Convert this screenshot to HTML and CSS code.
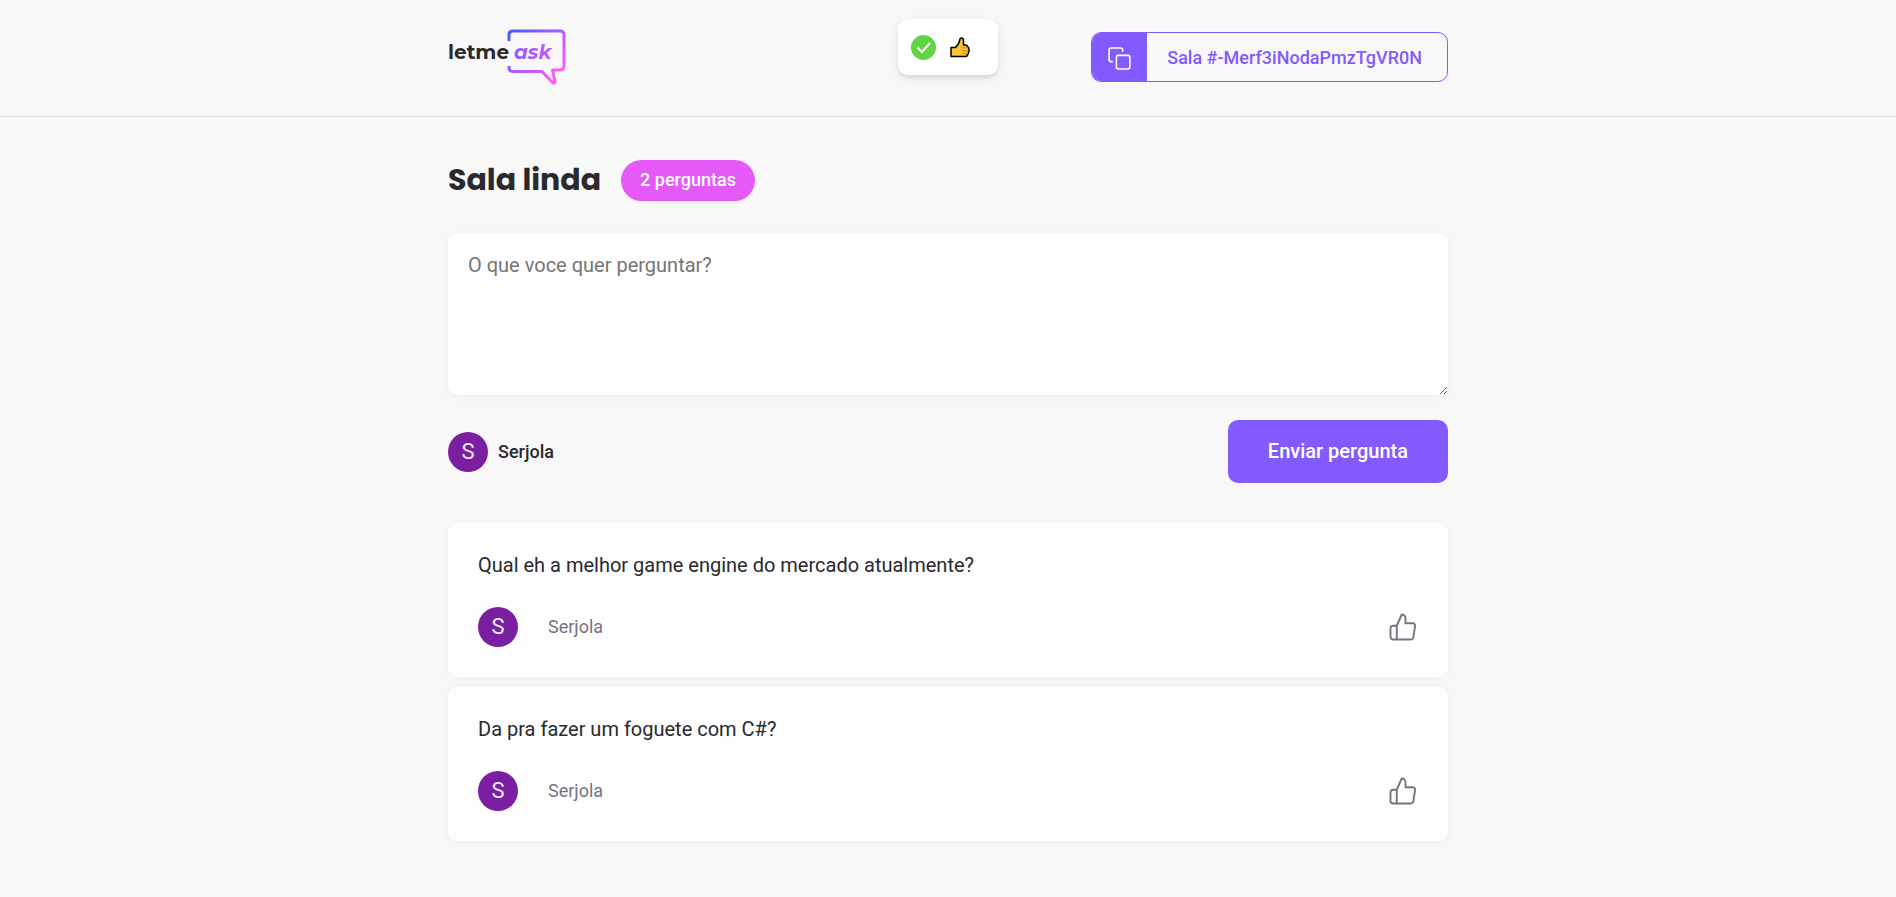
FILE: index.html
```html
<!DOCTYPE html>
<html lang="pt-BR">
<head>
<meta charset="utf-8">
<title>Letmeask</title>
<link rel="stylesheet" href="styles.css">
</head>
<body>
<svg class="symbols" aria-hidden="true">
  <symbol id="like" viewBox="0 0 24 24">
    <path d="M7 22H4C3.470 22 2.961 21.789 2.586 21.414C2.211 21.039 2 20.530 2 20V13C2 12.470 2.211 11.961 2.586 11.586C2.961 11.211 3.470 11 4 11H7M14 9V5C14 4.204 13.684 3.441 13.121 2.879C12.559 2.316 11.796 2 11 2L7 11V22H18.280C18.762 22.005 19.230 21.836 19.598 21.524C19.965 21.212 20.208 20.777 20.280 20.300L21.660 11.300C21.703 11.013 21.684 10.721 21.603 10.442C21.522 10.163 21.382 9.906 21.191 9.687C21 9.469 20.763 9.295 20.498 9.177C20.232 9.059 19.945 8.999 19.655 9H14Z"/>
  </symbol>
</svg>
<header class="page-header">
  <div class="container header-content">
    <svg class="logo" viewBox="0 0 118 58" role="img" aria-label="letme ask">
      <defs>
        <linearGradient id="bubble" gradientUnits="userSpaceOnUse" x1="60" y1="6" x2="104" y2="52">
          <stop offset="0" stop-color="#485bff"/>
          <stop offset="0.5" stop-color="#a95bff"/>
          <stop offset="1" stop-color="#ff59f8"/>
        </linearGradient>
        <linearGradient id="word" gradientUnits="userSpaceOnUse" x1="66" y1="18" x2="104" y2="30">
          <stop offset="0" stop-color="#8c5bff"/>
          <stop offset="1" stop-color="#c85bf8"/>
        </linearGradient>
      </defs>
      <text class="logo-letme" x="0" y="31">letme</text>
      <text class="logo-ask" x="66" y="31">ask</text>
      <path class="logo-bubble" d="M61 13V7Q61 3 65 3H112Q116 3 116 7V38Q116 42 112 42H104.500L107 53.500Q106.500 56 104.500 54.500L94 43.500H65Q61 43.500 61 39.500V38"/>
    </svg>
    <button class="room-code" type="button">
      <span class="copy">
        <svg viewBox="0 0 24 24" aria-hidden="true"><rect x="9" y="9" width="13" height="13" rx="2"/><path d="M5 15H4a2 2 0 0 1-2-2V4a2 2 0 0 1 2-2h9a2 2 0 0 1 2 2v1"/></svg>
      </span>
      <span class="code">Sala #-Merf3iNodaPmzTgVR0N</span>
    </button>
  </div>
</header>

<div class="toast" role="status">
  <svg class="check" viewBox="0 0 25 25" aria-hidden="true"><circle cx="12.500" cy="12.500" r="12.500"/><path d="M6.500 12.500l4.500 4.500 8-9"/></svg>
  <svg class="thumb" viewBox="0 0 20 21" role="img" aria-label="👍">
    <path class="hand" d="M1 10.500H5.500C8 8 9.500 6 9.800 2.500Q10 1 11.500 1Q13.500 1 13.500 4V8H16Q17.500 8 17.500 9.800Q19 10.500 18.800 12Q19.500 14 18.500 15.500Q18.500 17 17.500 17.500Q17.500 19.500 15.500 19.500H1Z"/>
    <path class="fingers" d="M18 10.800H12.500Q11 10.800 10.500 9.500M18 13.700H12M18 16.600H12"/>
  </svg>
</div>

<main class="container">
  <div class="room-title">
    <h1>Sala linda</h1>
    <span class="count">2 perguntas</span>
  </div>

  <form>
    <textarea class="question-input" aria-label="O que voce quer perguntar?" placeholder="O que voce quer perguntar?"></textarea>
    <div class="form-footer">
      <div class="user">
        <span class="avatar" aria-hidden="true">S</span>
        <span class="user-name">Serjola</span>
      </div>
      <button class="send" type="button">Enviar pergunta</button>
    </div>
  </form>

  <section class="questions">
    <article class="question">
      <p>Qual eh a melhor game engine do mercado atualmente?</p>
      <footer class="question-footer">
        <div class="author">
          <span class="avatar" aria-hidden="true">S</span>
          <span>Serjola</span>
        </div>
        <button class="like" type="button" aria-label="Marcar como gostei"><svg><use href="#like"/></svg></button>
      </footer>
    </article>
    <article class="question">
      <p>Da pra fazer um foguete com C#?</p>
      <footer class="question-footer">
        <div class="author">
          <span class="avatar" aria-hidden="true">S</span>
          <span>Serjola</span>
        </div>
        <button class="like" type="button" aria-label="Marcar como gostei"><svg><use href="#like"/></svg></button>
      </footer>
    </article>
  </section>
</main>
</body>
</html>
```
FILE: styles.css
```css
* {
  margin: 0;
  padding: 0;
  box-sizing: border-box;
}

body {
  background: #f8f8f8;
  color: #29292e;
}

body,
button,
textarea {
  font: 400 18px/24px Roboto, sans-serif;
}

button {
  border: 0;
  background: transparent;
  cursor: pointer;
}

.symbols {
  position: absolute;
  width: 0;
  height: 0;
}

.container {
  max-width: 1000px;
  margin: 0 auto;
}

.page-header {
  padding: 28px 0 30px;
  border-bottom: 1px solid #e2e2e2;
}

.header-content {
  display: flex;
  align-items: center;
  justify-content: space-between;
}

.logo {
  width: 118px;
  height: 58px;
}

.logo-letme,
.logo-ask {
  font: 700 20px Montserrat, Inter, sans-serif;
  fill: #29292e;
}

.logo-ask {
  font-style: italic;
  fill: url(#word);
}

.logo-bubble {
  fill: none;
  stroke: url(#bubble);
  stroke-width: 3;
  stroke-linejoin: round;
}

.room-code {
  display: flex;
  height: 50px;
  border: 1px solid #835afd;
  border-radius: 10px;
  overflow: hidden;
  color: #835afd;
}

.copy {
  display: flex;
  align-items: center;
  align-self: stretch;
  padding: 2px 15px 0;
  background: #835afd;
}

.copy svg {
  width: 25px;
  height: 25px;
  fill: none;
  stroke: #fff;
  stroke-width: 1.5;
  stroke-linecap: round;
  stroke-linejoin: round;
}

.code {
  align-self: center;
  padding: 1px 25px 0 20px;
  font-weight: 500;
}

.toast {
  position: absolute;
  top: 19px;
  left: 50%;
  transform: translateX(-50%);
  display: flex;
  align-items: center;
  gap: 14px;
  width: 100px;
  height: 56px;
  padding: 0 13px;
  border-radius: 10px;
  background: #fff;
  box-shadow: 0 3px 10px rgba(0, 0, 0, 0.1), 0 3px 3px rgba(0, 0, 0, 0.05);
}

.check {
  width: 25px;
  height: 25px;
  fill: #61d345;
}

.check path {
  fill: none;
  stroke: #fff;
  stroke-width: 2;
}

.thumb {
  width: 20px;
  height: 21px;
}

.hand {
  fill: #fcc238;
  stroke: #000;
  stroke-width: 1.5;
  stroke-linejoin: round;
}

.fingers {
  fill: none;
  stroke: #d98b1c;
}

.room-title {
  display: flex;
  align-items: center;
  gap: 20px;
  padding: 40px 0 30px;
}

.room-title h1 {
  font: 700 30px/46px Poppins, Inter, sans-serif;
}

.count {
  padding: 8px 19px 9px;
  border-radius: 24px;
  background: #e559f9;
  color: #fff;
  font-weight: 500;
}

.question-input {
  display: block;
  width: 100%;
  height: 162px;
  padding: 20px;
  border: 0;
  border-radius: 10px;
  background: #fefefe;
  box-shadow: 0 2px 12px rgba(0, 0, 0, 0.04);
  font-size: 20px;
  resize: vertical;
}

.question-input::placeholder {
  color: #757575;
}

.form-footer {
  display: flex;
  align-items: center;
  justify-content: space-between;
  margin-top: 25px;
}

.user,
.author {
  display: flex;
  align-items: center;
  gap: 10px;
}

.user-name {
  font-weight: 500;
}

.avatar {
  width: 40px;
  height: 40px;
  border-radius: 50%;
  background: #7b1fa2;
  color: #f2e9f6;
  font-size: 22px;
  line-height: 40px;
  text-align: center;
}

.send {
  padding: 19px 40px 20px;
  border-radius: 10px;
  background: #835afd;
  color: #fff;
  font-size: 20px;
  font-weight: 500;
}

.questions {
  display: flex;
  flex-direction: column;
  gap: 10px;
  margin: 40px 0;
}

.question {
  padding: 30px;
  border-radius: 10px;
  background: #fefefe;
  box-shadow: 0 2px 12px rgba(0, 0, 0, 0.04);
  font-size: 20px;
}

.question-footer {
  display: flex;
  align-items: center;
  justify-content: space-between;
  margin-top: 30px;
}

.author {
  gap: 30px;
  color: #737380;
  font-size: 18px;
}

.like svg {
  display: block;
  width: 30px;
  height: 30px;
  fill: none;
  stroke: #737380;
  stroke-width: 1.5;
  stroke-linecap: round;
  stroke-linejoin: round;
}
```
